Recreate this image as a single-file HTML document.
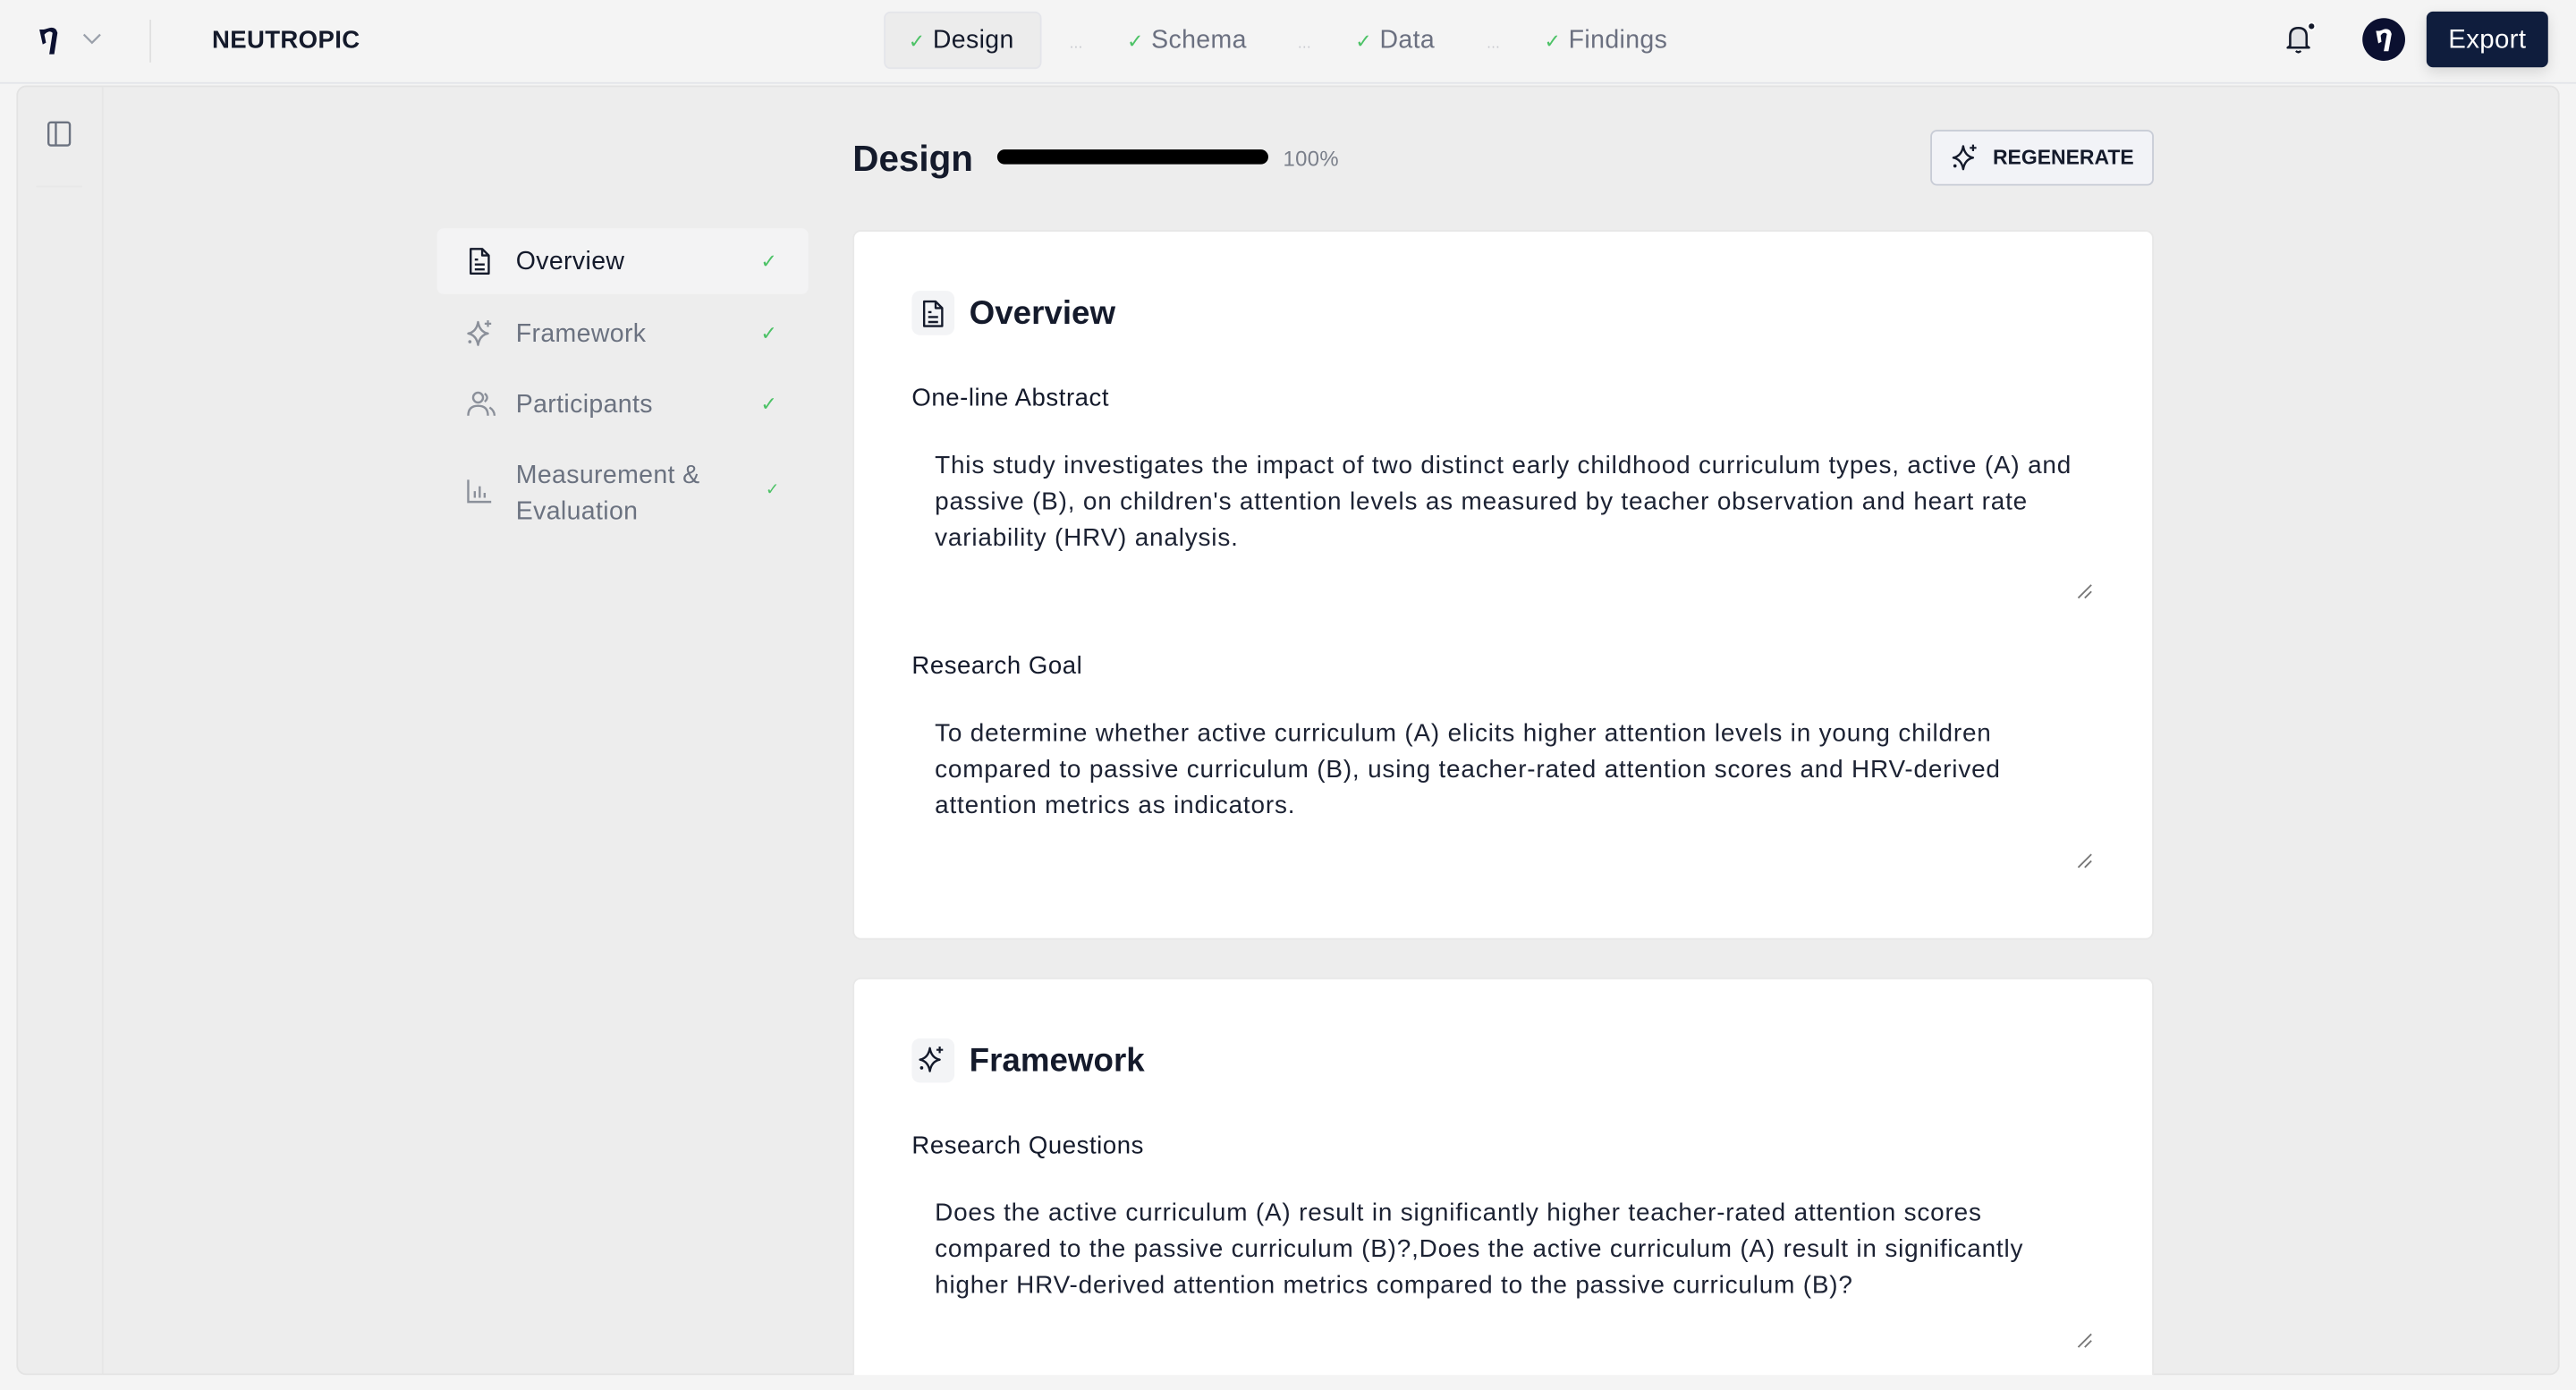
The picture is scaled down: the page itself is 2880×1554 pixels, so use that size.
<!DOCTYPE html>
<html><head><meta charset="utf-8"><style>
*{box-sizing:border-box;margin:0;padding:0}
html,body{width:2880px;height:1554px;overflow:hidden;background:#f4f4f4;font-family:"Liberation Sans",sans-serif;color:#141a2b}
#w{position:absolute;left:0;top:0;width:1568px;height:846px;transform:scale(1.836735);transform-origin:0 0;letter-spacing:0.2px}
.a{position:absolute}
.top{left:0;top:0;width:1568px;height:51px;background:#f4f4f4;border-bottom:1px solid #e3e5ea}
.nav{font-size:15.5px;line-height:20px}
.chk{color:#4cc266;font-size:12px}
.dots{color:#c4c6cc;font-size:9px}
.main{left:10px;top:52px;width:1548px;height:785px;background:#ededed;border:1px solid #e3e3e3;border-radius:6px}
.card{background:#fff;border-radius:5px;border:1px solid #e8e8e8}
.ib{width:26px;height:27px;background:#f3f4f6;border-radius:5px}
.lbl{font-size:15px;color:#141a2b;letter-spacing:0.3px}
.txt{font-size:15.2px;line-height:22px;color:#1c2233;letter-spacing:0.45px;white-space:nowrap}
.side{font-size:15.5px;color:#6b7280}
</style></head><body><div id="w">
<div class="a top"></div>
<svg class="a" style="left:22px;top:15px" width="16" height="20" viewBox="0 0 16 20"><path d="M2 3 L4 12 L6 11 L5 6 Q8 3 10 5 L8 18 L11 18 L13 5 Q12 1 8 2 Q5 3 4 3 Z" fill="#0b1030"/></svg>
<svg class="a" style="left:50px;top:19px" width="12" height="10"><path d="M1 2 L6 7 L11 2" stroke="#9aa0aa" fill="none" stroke-width="1.2"/></svg>
<div class="a" style="left:91px;top:12px;width:1px;height:26px;background:#e0e0e0"></div>
<div class="a" style="left:129px;top:16px;font-size:15px;font-weight:bold;color:#141a2b">NEUTROPIC</div>

<div class="a" style="left:538px;top:7px;width:96px;height:35px;background:#ececec;border:1px solid #e4e5ea;border-radius:4px"></div>
<div class="a nav" style="left:553px;top:15px"><span class="chk">✓</span> <span>Design</span></div>
<div class="a dots" style="left:651px;top:21px">...</div>
<div class="a nav" style="left:686px;top:15px;color:#6b7080"><span class="chk">✓</span> Schema</div>
<div class="a dots" style="left:790px;top:21px">...</div>
<div class="a nav" style="left:825px;top:15px;color:#6b7080"><span class="chk">✓</span> Data</div>
<div class="a dots" style="left:905px;top:21px">...</div>
<div class="a nav" style="left:940px;top:15px;color:#6b7080"><span class="chk">✓</span> Findings</div>

<svg class="a" style="left:1389px;top:13px" width="22" height="22" viewBox="0 0 22 22"><path d="M5 15 L5 9 Q5 4 10 4 Q15 4 15 9 L15 15 L16.5 16 L3.5 16 Z" fill="#e3e4e7" stroke="#141a2b" stroke-width="1.4" stroke-linejoin="round"/><path d="M8.5 18 Q10 19.5 11.5 18" stroke="#141a2b" fill="none" stroke-width="1.3"/><circle cx="18" cy="3" r="2.2" fill="#141a2b" stroke="#fff" stroke-width="1"/></svg>
<div class="a" style="left:1438px;top:11px;width:26px;height:26px;border-radius:50%;background:#0b1030"></div>
<svg class="a" style="left:1443px;top:15px" width="16" height="19" viewBox="0 0 16 20"><path d="M3 4 L4.5 12 L6.5 11 L6 7 Q8 4 10 6 L8 17 L11 17 L13 6 Q12 2 8 3 Q6 4 5 4 Z" fill="#fff"/></svg>
<div class="a" style="left:1477px;top:7px;width:74px;height:34px;background:#0f1d3d;border-radius:4px;color:#fff;font-size:16px;line-height:35px;text-align:center;box-shadow:0 3px 8px rgba(0,0,0,.12)">Export</div>

<div class="a main"></div>
<div class="a" style="left:62px;top:53px;width:1px;height:783px;background:#e6e6e6"></div>
<svg class="a" style="left:28px;top:73px" width="16" height="17"><rect x="1.5" y="1.5" width="13" height="14" rx="1.5" fill="none" stroke="#6b7280" stroke-width="1.3"/><line x1="6" y1="2" x2="6" y2="15" stroke="#6b7280" stroke-width="1.3"/></svg>
<div class="a" style="left:22px;top:113px;width:28px;height:1px;background:#e8e8e8"></div>

<div class="a" style="left:519px;top:84px;font-size:22px;font-weight:bold;color:#141a2b;letter-spacing:0">Design</div>
<div class="a" style="left:607px;top:91px;width:165px;height:9px;background:#000;border-radius:5px"></div>
<div class="a" style="left:781px;top:89px;font-size:13px;color:#7a7f8a">100%</div>
<div class="a" style="left:1175px;top:79px;width:136px;height:34px;background:#f2f3f7;border:1px solid #c8ccd6;border-radius:4px"></div>
<svg class="a" style="left:1187px;top:86px" width="18" height="20" viewBox="0 0 18 20"><path d="M8 3 Q9 9 14 10 Q9 11 8 17 Q7 11 2 10 Q7 9 8 3 Z" fill="none" stroke="#141a2b" stroke-width="1.3" stroke-linejoin="round"/><path d="M14 2 V6 M12 4 H16" stroke="#141a2b" stroke-width="1.2"/><circle cx="3" cy="15" r="1" fill="#141a2b"/></svg>
<div class="a" style="left:1213px;top:89px;font-size:12.5px;font-weight:bold;color:#141a2b;letter-spacing:0">REGENERATE</div>

<div class="a" style="left:266px;top:139px;width:226px;height:40px;background:#f3f3f4;border-radius:4px"></div>
<svg class="a" style="left:284px;top:150px" width="16" height="18" viewBox="0 0 16 18"><path d="M2.5 1.5 H9.5 L13.5 5.5 V16.5 H2.5 Z M9.5 1.5 V5.5 H13.5" fill="none" stroke="#141a2b" stroke-width="1.3" stroke-linejoin="round"/><path d="M5 8 H7 M5 11 H11 M5 14 H11" stroke="#141a2b" stroke-width="1.3"/></svg>
<div class="a" style="left:314px;top:151px;font-size:15.5px;color:#141a2b">Overview</div>
<div class="a chk" style="left:463px;top:152px">✓</div>
<svg class="a" style="left:283px;top:193px" width="18" height="20" viewBox="0 0 18 20"><path d="M8 3 Q9 9 14 10 Q9 11 8 17 Q7 11 2 10 Q7 9 8 3 Z" fill="none" stroke="#8b909a" stroke-width="1.3" stroke-linejoin="round"/><path d="M14 2 V6 M12 4 H16" stroke="#8b909a" stroke-width="1.2"/><circle cx="3" cy="15" r="1" fill="#8b909a"/></svg>
<div class="a side" style="left:314px;top:195px">Framework</div>
<div class="a chk" style="left:463px;top:196px">✓</div>
<svg class="a" style="left:283px;top:237px" width="20" height="18" viewBox="0 0 20 18"><circle cx="8" cy="5" r="3" fill="none" stroke="#8b909a" stroke-width="1.3"/><path d="M2 16 Q2 10 8 10 Q14 10 14 16" fill="none" stroke="#8b909a" stroke-width="1.3"/><path d="M12 2.5 Q15 5 12 7.5 M15 11 Q18 13 18 16" fill="none" stroke="#8b909a" stroke-width="1.3"/></svg>
<div class="a side" style="left:314px;top:238px">Participants</div>
<div class="a chk" style="left:463px;top:239px">✓</div>
<svg class="a" style="left:283px;top:290px" width="18" height="18"><path d="M2 2 V15.5 H16" fill="none" stroke="#8b909a" stroke-width="1.3"/><path d="M6 13 V9 M9 13 V6 M12 13 V10" stroke="#8b909a" stroke-width="1.3"/></svg>
<div class="a side" style="left:314px;top:279px;line-height:22px">Measurement &amp;<br>Evaluation</div>
<div class="a chk" style="left:466px;top:293px;font-size:10px">✓</div>

<div class="a card" style="left:519px;top:140px;width:792px;height:432px"></div>
<div class="a ib" style="left:555px;top:177px"></div>
<svg class="a" style="left:560px;top:182px" width="16" height="18" viewBox="0 0 16 18"><path d="M2.5 1.5 H9.5 L13.5 5.5 V16.5 H2.5 Z M9.5 1.5 V5.5 H13.5" fill="none" stroke="#141a2b" stroke-width="1.3" stroke-linejoin="round"/><path d="M5 8 H7 M5 11 H11 M5 14 H11" stroke="#141a2b" stroke-width="1.3"/></svg>
<div class="a" style="left:590px;top:180px;font-size:20px;font-weight:bold;color:#141a2b;letter-spacing:0">Overview</div>
<div class="a lbl" style="left:555px;top:234px">One-line Abstract</div>
<div class="a txt" style="left:569px;top:273px">This study investigates the impact of two distinct early childhood curriculum types, active (A) and<br>passive (B), on children's attention levels as measured by teacher observation and heart rate<br>variability (HRV) analysis.</div>
<svg class="a" style="left:1264px;top:355px" width="10" height="10"><path d="M1 9 L9 1 M5 9 L9 5" stroke="#777" stroke-width="1"/></svg>
<div class="a lbl" style="left:555px;top:397px">Research Goal</div>
<div class="a txt" style="left:569px;top:436px">To determine whether active curriculum (A) elicits higher attention levels in young children<br>compared to passive curriculum (B), using teacher-rated attention scores and HRV-derived<br>attention metrics as indicators.</div>
<svg class="a" style="left:1264px;top:519px" width="10" height="10"><path d="M1 9 L9 1 M5 9 L9 5" stroke="#777" stroke-width="1"/></svg>

<div class="a card" style="left:519px;top:595px;width:792px;height:242px;border-bottom:none;border-radius:5px 5px 0 0"></div>
<div class="a ib" style="left:555px;top:632px"></div>
<svg class="a" style="left:558px;top:635px" width="18" height="20" viewBox="0 0 18 20"><path d="M8 3 Q9 9 14 10 Q9 11 8 17 Q7 11 2 10 Q7 9 8 3 Z" fill="none" stroke="#141a2b" stroke-width="1.3" stroke-linejoin="round"/><path d="M14 2 V6 M12 4 H16" stroke="#141a2b" stroke-width="1.2"/><circle cx="3" cy="15" r="1" fill="#141a2b"/></svg>
<div class="a" style="left:590px;top:635px;font-size:20px;font-weight:bold;color:#141a2b;letter-spacing:0">Framework</div>
<div class="a lbl" style="left:555px;top:689px">Research Questions</div>
<div class="a txt" style="left:569px;top:728px">Does the active curriculum (A) result in significantly higher teacher-rated attention scores<br>compared to the passive curriculum (B)?,Does the active curriculum (A) result in significantly<br>higher HRV-derived attention metrics compared to the passive curriculum (B)?</div>
<svg class="a" style="left:1264px;top:811px" width="10" height="10"><path d="M1 9 L9 1 M5 9 L9 5" stroke="#777" stroke-width="1"/></svg>
<div class="a" style="left:0;top:837px;width:1568px;height:9px;background:#f4f4f4"></div>
</div></body></html>
